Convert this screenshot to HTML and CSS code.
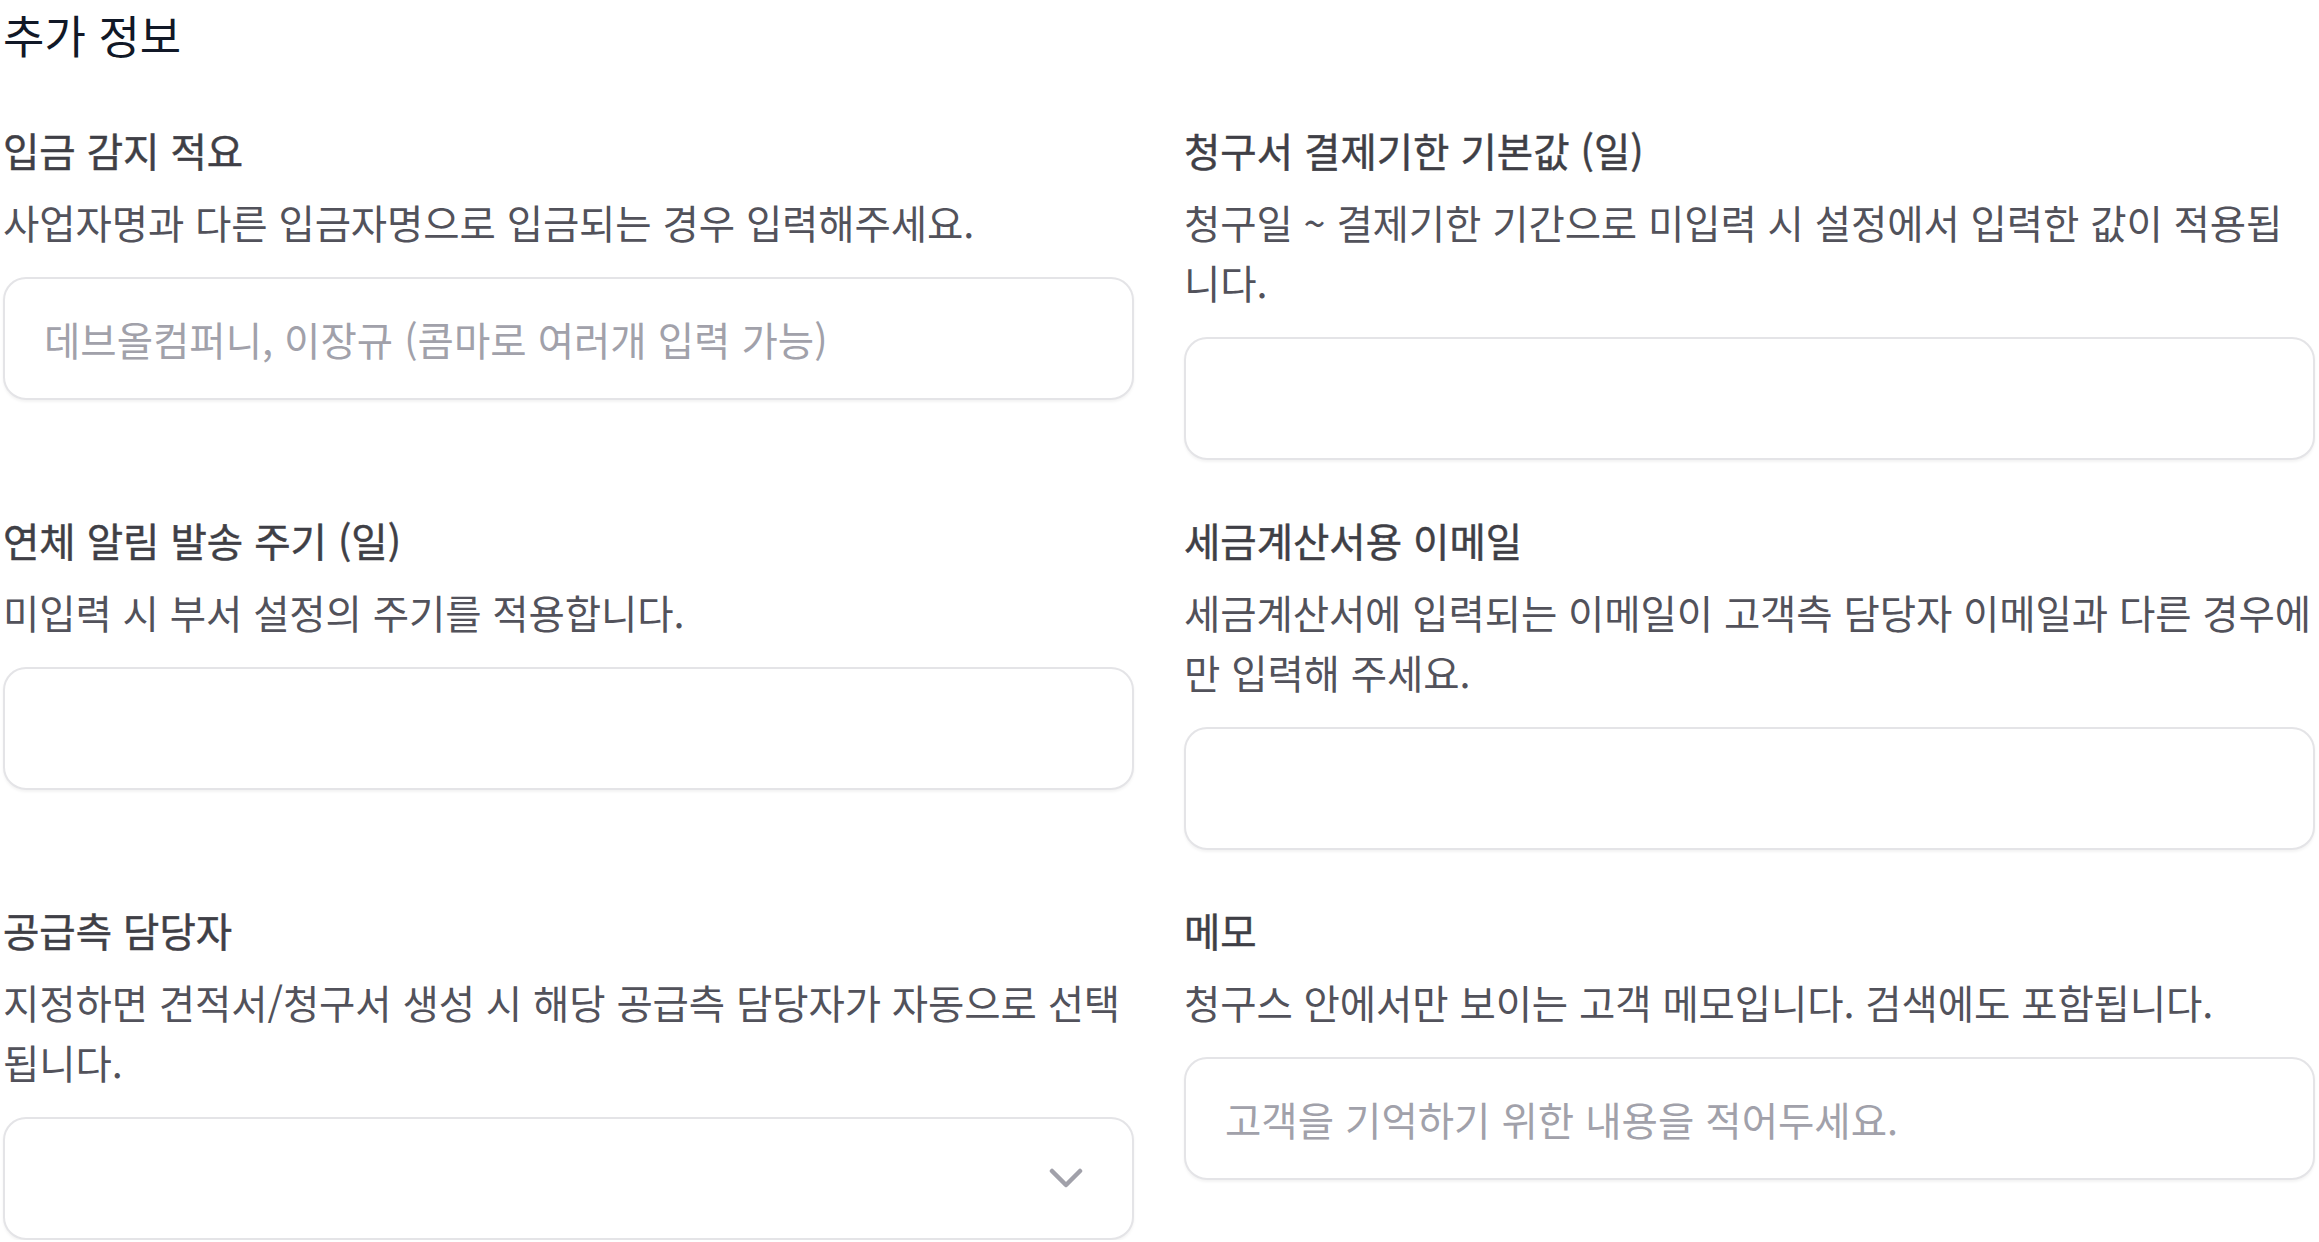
FILE: index.html
```html
<!DOCTYPE html>
<html lang="ko">
<head>
  <meta charset="UTF-8" />
  <title>추가 정보</title>
  <link rel="stylesheet" href="styles.css">
</head>
<body>

<div class="page">
  <h2 class="section-title">추가 정보</h2>

  <div class="form-grid">
    <!-- 입금 감지 -->
    <div class="field">
      <label class="field-label" for="deposit">입금 감지 적요</label>
      <p class="field-desc">사업자명과 다른 입금자명으로 입금되는 경우 입력해주세요.</p>
      <input class="text-input" id="deposit" type="text" placeholder="데브올컴퍼니, 이장규 (콤마로 여러개 입력 가능)">
    </div>

    <div class="field">
      <label class="field-label" for="due">청구서 결제기한 기본값 (일)</label>
      <p class="field-desc">청구일 ~ 결제기한 기간으로 미입력 시 설정에서 입력한 값이 적용됩니다.</p>
      <input class="text-input" id="due" type="text">
    </div>

    <div class="field">
      <label class="field-label" for="overdue">연체 알림 발송 주기 (일)</label>
      <p class="field-desc">미입력 시 부서 설정의 주기를 적용합니다.</p>
      <input class="text-input" id="overdue" type="text">
    </div>

    <div class="field">
      <label class="field-label" for="taxmail">세금계산서용 이메일</label>
      <p class="field-desc">세금계산서에 입력되는 이메일이 고객측 담당자 이메일과 다른 경우에만 입력해 주세요.</p>
      <input class="text-input" id="taxmail" type="text">
    </div>

    <div class="field">
      <label class="field-label" for="manager">공급측 담당자</label>
      <p class="field-desc">지정하면 견적서/청구서 생성 시 해당 공급측 담당자가 자동으로 선택됩니다.</p>
      <div class="select-wrap">
        <select class="text-input select" id="manager">
          <option value=""></option>
        </select>
        <svg class="chevron" width="34" height="20" viewBox="0 0 34 20">
          <polyline points="3,3 17,17 31,3" fill="none" stroke="#a1a1aa" stroke-width="4.5" stroke-linecap="round" stroke-linejoin="round"/>
        </svg>
      </div>
    </div>

    <div class="field">
      <label class="field-label" for="memo">메모</label>
      <p class="field-desc">청구스 안에서만 보이는 고객 메모입니다. 검색에도 포함됩니다.</p>
      <input class="text-input" id="memo" type="text" placeholder="고객을 기억하기 위한 내용을 적어두세요.">
    </div>
  </div>
</div>

</body>
</html>
```

FILE: styles.css
```css
body {
  margin: 0;
  background: #fff;
  font-family: "Noto Sans CJK KR", "Noto Sans", sans-serif;
}

.page {
  padding: 0 4px 0 3px;
}

.section-title {
  margin: 0 0 50px;
  font-size: 45px;
  font-weight: 400;
  line-height: 70px;
  color: #111827;
}

/* 2열 입력 폼 */
.form-grid {
  display: grid;
  grid-template-columns: 1fr 1fr;
  column-gap: 50px;
  row-gap: 50px;
  align-items: start;
}

.field {
  display: flex;
  flex-direction: column;
}

.field-label {
  font-size: 39.5px;
  font-weight: 400;
  line-height: 60px;
  color: #3f3f46;
  -webkit-text-stroke: 0.5px #3f3f46;
}

.field-desc {
  margin: 12px 0 25px;
  font-size: 39.5px;
  letter-spacing: -0.12px;
  line-height: 60px;
  color: #52525b;
}

.text-input {
  box-sizing: border-box;
  width: 100%;
  height: 123px;
  padding: 0 39px;
  border: 2px solid #e4e4e7;
  border-radius: 23px;
  background: #fff;
  box-shadow: 0 2px 3px rgba(0, 0, 0, 0.05);
  font-family: inherit;
  font-size: 39.5px;
  color: #27272a;
  outline: none;
}

.text-input::placeholder {
  color: #a1a1aa;
}

.select-wrap {
  position: relative;
}

.select {
  appearance: none;
  -webkit-appearance: none;
}

.chevron {
  position: absolute;
  right: 51px;
  top: 51px;
  pointer-events: none;
}
```
